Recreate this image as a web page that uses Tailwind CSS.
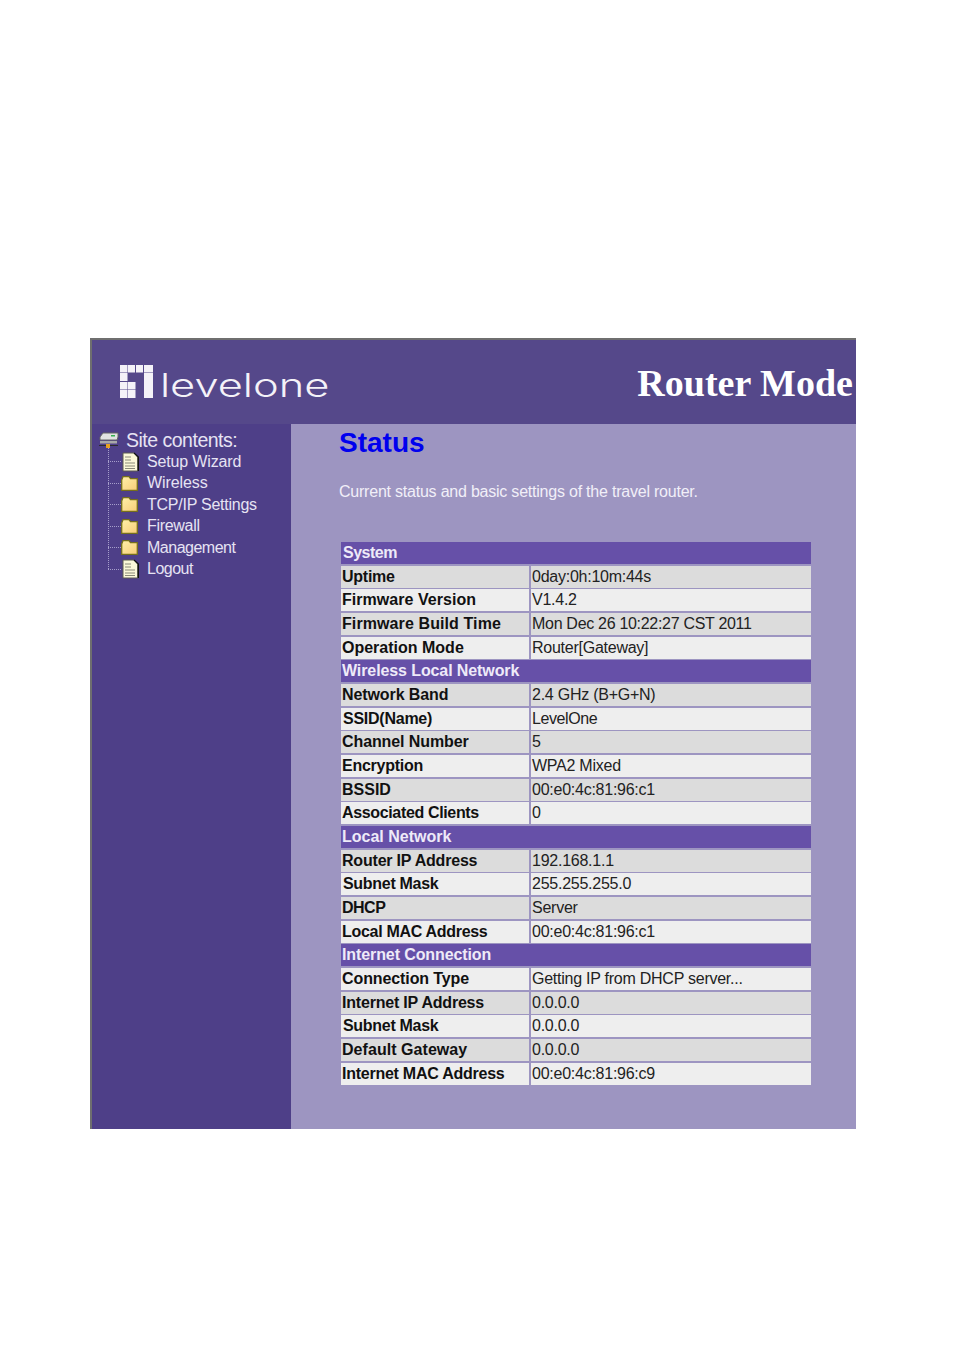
<!DOCTYPE html>
<html>
<head>
<meta charset="utf-8">
<script src="https://cdn.jsdelivr.net/npm/@tailwindcss/browser@4"></script>
</head>
<body class="bg-white">
<div class="h-[1350px] w-[954px] pl-[90px] pt-[338px] font-['Liberation_Sans',sans-serif]">
  <div class="flex h-[791px] w-[766px] flex-col border-l-2 border-t-2 border-[#6f6f6f]">
    <header class="flex h-[84px] items-center justify-between bg-[#55488a] pr-[3px] pl-[28px]">
      <div class="mt-[3px] flex items-end gap-[7px]">
        <svg class="mb-[4px]" width="33" height="33" viewBox="0 0 33 33" fill="#f4f2f8">
          <rect x="0" y="0" width="7.5" height="7.5"/><rect x="8" y="0" width="7" height="7.5"/><rect x="16" y="0" width="7" height="7.5"/><rect x="24" y="0" width="9" height="7.5"/>
          <rect x="0" y="8" width="7.5" height="8"/><rect x="24" y="8" width="9" height="25"/>
          <rect x="0" y="17" width="7.5" height="7.5"/><rect x="8" y="17" width="7.5" height="7.5"/>
          <rect x="0" y="25" width="7.5" height="8"/><rect x="8" y="25" width="7.5" height="8"/>
        </svg>
        <span class="origin-left scale-x-[1.355] font-['Inter',sans-serif] text-[32px] leading-[32px] font-light text-[#f4f2f8]">levelone</span>
      </div>
      <h1 class="mt-[2px] font-['Liberation_Serif',serif] text-[38px] leading-none font-bold text-white">Router Mode</h1>
    </header>
    <div class="flex flex-1">
      <nav class="w-[199px] bg-[#4e3f88] pt-[6px] pl-[8px] text-[#e6e3f3]">
        <div class="-ml-[1px] flex h-[21px] items-center gap-[7px] text-[19.5px] tracking-[-0.5px]">
          <svg width="20" height="17" viewBox="0 0 20 17"><path d="M1 5 4 1H19V5L18 8H1Z" fill="#e2e2e2" stroke="#666"/><rect x="12" y="3" width="4" height="1.5" fill="#35b050"/><rect x="1" y="9" width="17" height="2.5" fill="#a8a8a8"/><rect x="0" y="13" width="19" height="1" fill="#2c2c2c"/><rect x="7" y="12" width="4" height="4" fill="#e8a020"/></svg>
          <span>Site contents:</span>
        </div>
        <ul class="relative ml-[8px] text-[16px]">
          <li class="absolute top-[-3px] bottom-[11px] left-0 border-l border-dotted border-[#a69ecb]"></li>
          <li class="relative flex h-[21.5px] items-center pl-[14px]">
            <span class="absolute left-0 top-[10px] w-[13px] border-t border-dotted border-[#a69ecb]"></span>
            <span class="flex w-[25px] shrink-0">
              <svg width="17" height="20" viewBox="0 0 17 20"><path d="M1 1H12L15.5 5V19H1Z" fill="#fbf8d8" stroke="#5c5c50"/><path d="M12 1 16.5 5V19" fill="none" stroke="#111" stroke-width="1.2"/><path d="M3 5H9M3 8H9M3 11H13M3 14H13M3 16.5H13" stroke="#8a8a78"/></svg>
            </span>
            <span class="tracking-[-0.15px]">Setup Wizard</span>
          </li>
          <li class="relative flex h-[21.5px] items-center pl-[14px]">
            <span class="absolute left-0 top-[10px] w-[13px] border-t border-dotted border-[#a69ecb]"></span>
            <span class="-ml-[1px] flex w-[26px] shrink-0">
              <svg width="17" height="15" viewBox="0 0 17 15"><defs><linearGradient id="f1" x1="0" y1="0" x2="1" y2="1"><stop offset="0" stop-color="#fff0a8"/><stop offset="1" stop-color="#f8cd78"/></linearGradient></defs><path d="M.7 4 2 .7H8L9.5 2.7H16.3V14.3H.7Z" fill="url(#f1)" stroke="#77701c" stroke-width="1.3"/></svg>
            </span>
            <span class="tracking-[-0.1px]">Wireless</span>
          </li>
          <li class="relative flex h-[21.5px] items-center pl-[14px]">
            <span class="absolute left-0 top-[10px] w-[13px] border-t border-dotted border-[#a69ecb]"></span>
            <span class="-ml-[1px] flex w-[26px] shrink-0">
              <svg width="17" height="15" viewBox="0 0 17 15"><path d="M.7 4 2 .7H8L9.5 2.7H16.3V14.3H.7Z" fill="url(#f1)" stroke="#77701c" stroke-width="1.3"/></svg>
            </span>
            <span class="tracking-[-0.25px]">TCP/IP Settings</span>
          </li>
          <li class="relative flex h-[21.5px] items-center pl-[14px]">
            <span class="absolute left-0 top-[10px] w-[13px] border-t border-dotted border-[#a69ecb]"></span>
            <span class="-ml-[1px] flex w-[26px] shrink-0">
              <svg width="17" height="15" viewBox="0 0 17 15"><path d="M.7 4 2 .7H8L9.5 2.7H16.3V14.3H.7Z" fill="url(#f1)" stroke="#77701c" stroke-width="1.3"/></svg>
            </span>
            <span class="tracking-[-0.3px]">Firewall</span>
          </li>
          <li class="relative flex h-[21.5px] items-center pl-[14px]">
            <span class="absolute left-0 top-[10px] w-[13px] border-t border-dotted border-[#a69ecb]"></span>
            <span class="-ml-[1px] flex w-[26px] shrink-0">
              <svg width="17" height="15" viewBox="0 0 17 15"><path d="M.7 4 2 .7H8L9.5 2.7H16.3V14.3H.7Z" fill="url(#f1)" stroke="#77701c" stroke-width="1.3"/></svg>
            </span>
            <span class="tracking-[-0.5px]">Management</span>
          </li>
          <li class="relative flex h-[21.5px] items-center pl-[14px]">
            <span class="absolute left-0 top-[10px] w-[13px] border-t border-dotted border-[#a69ecb]"></span>
            <span class="flex w-[25px] shrink-0">
              <svg width="17" height="20" viewBox="0 0 17 20"><path d="M1 1H12L15.5 5V19H1Z" fill="#fbf8d8" stroke="#5c5c50"/><path d="M12 1 16.5 5V19" fill="none" stroke="#111" stroke-width="1.2"/><path d="M3 5H9M3 8H9M3 11H13M3 14H13M3 16.5H13" stroke="#8a8a78"/></svg>
            </span>
            <span class="tracking-[-0.5px]">Logout</span>
          </li>
        </ul>
      </nav>
      <main class="flex-1 bg-[#9d95c1] pl-[48px]">
        <h2 class="mt-[3px] h-[32px] text-[28px] leading-[32px] font-bold text-[#0000ee]">Status</h2>
        <p class="mt-[23px] text-[16px] leading-[20px] tracking-[-0.22px] text-[#f1eff8]">Current status and basic settings of the travel router.</p>
        <div class="mt-[40px] ml-[2px] w-[470px] text-[16px] leading-[22px] tracking-[-0.25px]">
          <div class="mb-[2px] h-[21.68px] bg-[#6650a8] pl-[2px] font-bold tracking-[-0.5px] text-[#eeeaf8]">System</div>
          <div class="mb-[2px] grid h-[21.68px] grid-cols-[188px_1fr] gap-[2px]"><div class="bg-[#dcdcdc] pl-[1px] font-bold text-[#111]">Uptime</div><div class="bg-[#dcdcdc] pl-[1px] text-[#222]">0day:0h:10m:44s</div></div>
          <div class="mb-[2px] grid h-[21.68px] grid-cols-[188px_1fr] gap-[2px]"><div class="bg-[#eeeeee] pl-[1px] font-bold tracking-[0.05px] text-[#111]">Firmware Version</div><div class="bg-[#eeeeee] pl-[1px] text-[#222]">V1.4.2</div></div>
          <div class="mb-[2px] grid h-[21.68px] grid-cols-[188px_1fr] gap-[2px]"><div class="bg-[#dcdcdc] pl-[1px] font-bold tracking-[0.1px] text-[#111]">Firmware Build Time</div><div class="bg-[#dcdcdc] pl-[1px] tracking-[-0.3px] text-[#222]">Mon Dec 26 10:22:27 CST 2011</div></div>
          <div class="mb-[2px] grid h-[21.68px] grid-cols-[188px_1fr] gap-[2px]"><div class="bg-[#eeeeee] pl-[1px] font-bold tracking-normal text-[#111]">Operation Mode</div><div class="bg-[#eeeeee] pl-[1px] text-[#222]">Router[Gateway]</div></div>
          <div class="mb-[2px] h-[21.68px] bg-[#6650a8] pl-[1px] font-bold tracking-[-0.1px] text-[#eeeaf8]">Wireless Local Network</div>
          <div class="mb-[2px] grid h-[21.68px] grid-cols-[188px_1fr] gap-[2px]"><div class="bg-[#dcdcdc] pl-[1px] font-bold tracking-[-0.1px] text-[#111]">Network Band</div><div class="bg-[#dcdcdc] pl-[1px] text-[#222]">2.4 GHz (B+G+N)</div></div>
          <div class="mb-[2px] grid h-[21.68px] grid-cols-[188px_1fr] gap-[2px]"><div class="bg-[#eeeeee] pl-[2px] font-bold text-[#111]">SSID(Name)</div><div class="bg-[#eeeeee] pl-[1px] tracking-[-0.4px] text-[#222]">LevelOne</div></div>
          <div class="mb-[2px] grid h-[21.68px] grid-cols-[188px_1fr] gap-[2px]"><div class="bg-[#dcdcdc] pl-[1px] font-bold tracking-[-0.1px] text-[#111]">Channel Number</div><div class="bg-[#dcdcdc] pl-[1px] text-[#222]">5</div></div>
          <div class="mb-[2px] grid h-[21.68px] grid-cols-[188px_1fr] gap-[2px]"><div class="bg-[#eeeeee] pl-[1px] font-bold text-[#111]">Encryption</div><div class="bg-[#eeeeee] pl-[1px] text-[#222]">WPA2 Mixed</div></div>
          <div class="mb-[2px] grid h-[21.68px] grid-cols-[188px_1fr] gap-[2px]"><div class="bg-[#dcdcdc] pl-[1px] font-bold tracking-normal text-[#111]">BSSID</div><div class="bg-[#dcdcdc] pl-[1px] text-[#222]">00:e0:4c:81:96:c1</div></div>
          <div class="mb-[2px] grid h-[21.68px] grid-cols-[188px_1fr] gap-[2px]"><div class="bg-[#eeeeee] pl-[1px] font-bold tracking-[-0.35px] text-[#111]">Associated Clients</div><div class="bg-[#eeeeee] pl-[1px] text-[#222]">0</div></div>
          <div class="mb-[2px] h-[21.68px] bg-[#6650a8] pl-[1px] font-bold tracking-normal text-[#eeeaf8]">Local Network</div>
          <div class="mb-[2px] grid h-[21.68px] grid-cols-[188px_1fr] gap-[2px]"><div class="bg-[#dcdcdc] pl-[1px] font-bold tracking-[-0.2px] text-[#111]">Router IP Address</div><div class="bg-[#dcdcdc] pl-[1px] text-[#222]">192.168.1.1</div></div>
          <div class="mb-[2px] grid h-[21.68px] grid-cols-[188px_1fr] gap-[2px]"><div class="bg-[#eeeeee] pl-[2px] font-bold tracking-[-0.3px] text-[#111]">Subnet Mask</div><div class="bg-[#eeeeee] pl-[1px] text-[#222]">255.255.255.0</div></div>
          <div class="mb-[2px] grid h-[21.68px] grid-cols-[188px_1fr] gap-[2px]"><div class="bg-[#dcdcdc] pl-[1px] font-bold tracking-[-0.5px] text-[#111]">DHCP</div><div class="bg-[#dcdcdc] pl-[1px] text-[#222]">Server</div></div>
          <div class="mb-[2px] grid h-[21.68px] grid-cols-[188px_1fr] gap-[2px]"><div class="bg-[#eeeeee] pl-[1px] font-bold tracking-[-0.3px] text-[#111]">Local MAC Address</div><div class="bg-[#eeeeee] pl-[1px] text-[#222]">00:e0:4c:81:96:c1</div></div>
          <div class="mb-[2px] h-[21.68px] bg-[#6650a8] pl-[1px] font-bold tracking-[-0.1px] text-[#eeeaf8]">Internet Connection</div>
          <div class="mb-[2px] grid h-[21.68px] grid-cols-[188px_1fr] gap-[2px]"><div class="bg-[#eeeeee] pl-[1px] font-bold tracking-[-0.1px] text-[#111]">Connection Type</div><div class="bg-[#eeeeee] pl-[1px] text-[#222]">Getting IP from DHCP server...</div></div>
          <div class="mb-[2px] grid h-[21.68px] grid-cols-[188px_1fr] gap-[2px]"><div class="bg-[#dcdcdc] pl-[1px] font-bold tracking-[-0.2px] text-[#111]">Internet IP Address</div><div class="bg-[#dcdcdc] pl-[1px] text-[#222]">0.0.0.0</div></div>
          <div class="mb-[2px] grid h-[21.68px] grid-cols-[188px_1fr] gap-[2px]"><div class="bg-[#eeeeee] pl-[2px] font-bold tracking-[-0.3px] text-[#111]">Subnet Mask</div><div class="bg-[#eeeeee] pl-[1px] text-[#222]">0.0.0.0</div></div>
          <div class="mb-[2px] grid h-[21.68px] grid-cols-[188px_1fr] gap-[2px]"><div class="bg-[#dcdcdc] pl-[1px] font-bold tracking-[0.05px] text-[#111]">Default Gateway</div><div class="bg-[#dcdcdc] pl-[1px] text-[#222]">0.0.0.0</div></div>
          <div class="grid h-[21.68px] grid-cols-[188px_1fr] gap-[2px]"><div class="bg-[#eeeeee] pl-[1px] font-bold text-[#111]">Internet MAC Address</div><div class="bg-[#eeeeee] pl-[1px] text-[#222]">00:e0:4c:81:96:c9</div></div>
        </div>
      </main>
    </div>
  </div>
</div>
</body>
</html>
